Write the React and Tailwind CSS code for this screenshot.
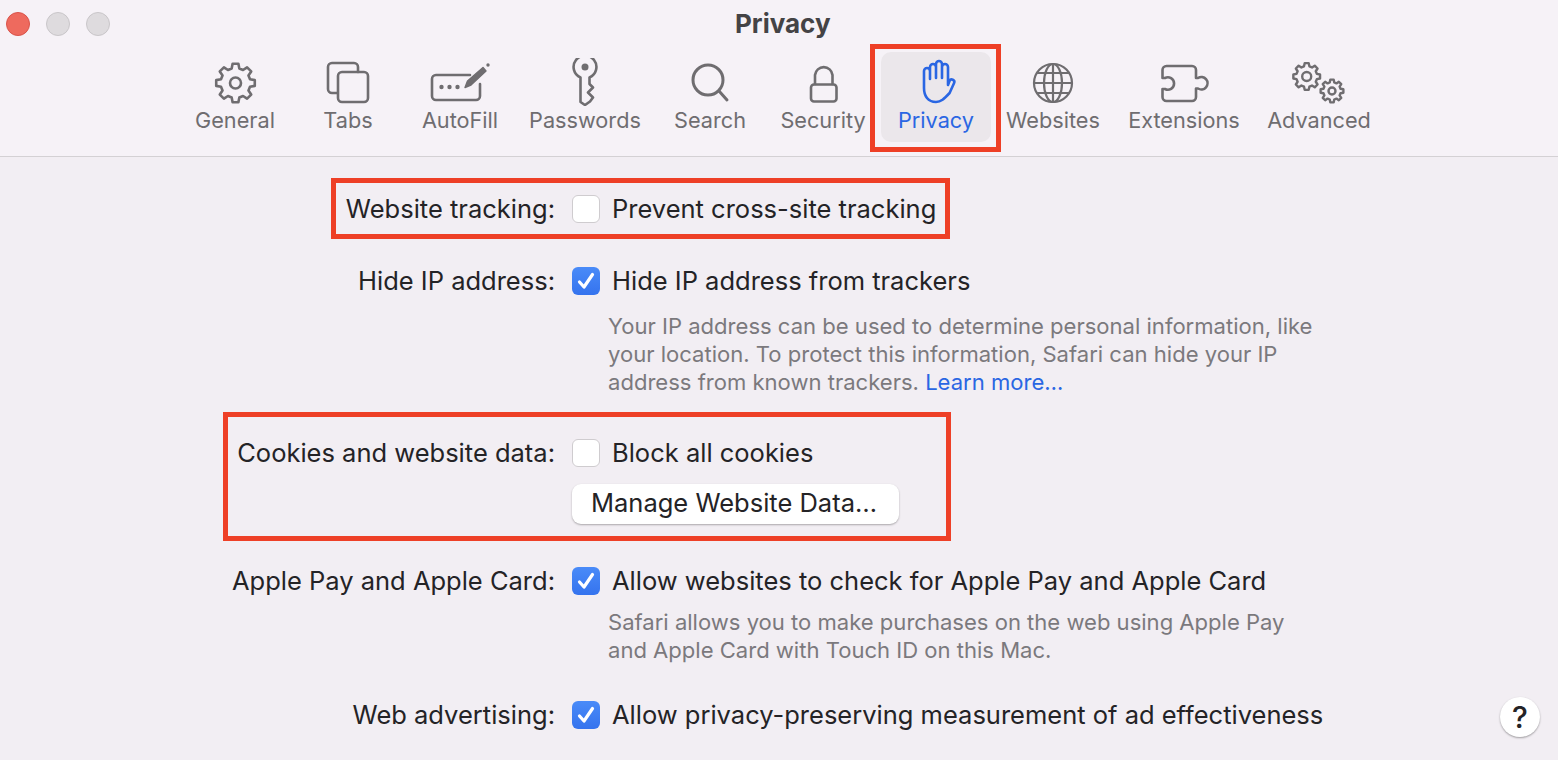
import React from "react";

function gear(cx, cy, rO, rI, n, offset = 0) {
  const step = (Math.PI * 2) / n;
  let d = "";
  for (let i = 0; i < n; i++) {
    const a = -Math.PI / 2 + offset + i * step;
    const pts = [
      [rI, a - 0.33 * step],
      [rO, a - 0.19 * step],
      [rO, a + 0.19 * step],
      [rI, a + 0.33 * step],
    ];
    pts.forEach(([r, t], j) => {
      const x = (cx + r * Math.cos(t)).toFixed(2);
      const y = (cy + r * Math.sin(t)).toFixed(2);
      d += i === 0 && j === 0 ? `M${x} ${y}` : ` L${x} ${y}`;
    });
  }
  return d + " Z";
}

function Icon({ cx, color = "#6f6d70", sw = 2.6, children }) {
  return (
    <svg
      width="60"
      height="48"
      viewBox={`${cx - 30} 58 60 48`}
      fill="none"
      stroke={color}
      strokeWidth={sw}
      strokeLinecap="round"
      strokeLinejoin="round"
      className="block"
    >
      {children}
    </svg>
  );
}

const tabs = [
  {
    label: "General",
    w: "w-[112px]",
    icon: (
      <Icon cx={235}>
        <path d={gear(235.5, 83, 19.5, 15, 8)} />
        <circle cx="235.5" cy="83" r="5.5" />
      </Icon>
    ),
  },
  {
    label: "Tabs",
    w: "w-[114px]",
    icon: (
      <Icon cx={348}>
        <path d="M337 93 H332 A4 4 0 0 1 328 89 V67 A4 4 0 0 1 332 63 H354 A4 4 0 0 1 358 67 V72" />
        <rect x="338" y="72" width="30" height="30" rx="4" />
      </Icon>
    ),
  },
  {
    label: "AutoFill",
    w: "w-[110px]",
    icon: (
      <Icon cx={460}>
        <path d="M470 75 H436 A4 4 0 0 0 432 79 V96 A4 4 0 0 0 436 100 H476 A4 4 0 0 0 480 96 V84" />
        <circle cx="441.5" cy="87" r="2.2" fill="#6f6d70" stroke="none" />
        <circle cx="449.5" cy="87" r="2.2" fill="#6f6d70" stroke="none" />
        <circle cx="457.5" cy="87" r="2.2" fill="#6f6d70" stroke="none" />
        <path d="M465 87.5 L467.5 81 L483 67.5 L486 71 L471 85 Z" fill="#6f6d70" strokeWidth="1.4" />
        <circle cx="488" cy="65" r="1.7" fill="#6f6d70" stroke="none" />
      </Icon>
    ),
  },
  {
    label: "Passwords",
    w: "w-[140px]",
    icon: (
      <Icon cx={585}>
        <path d="M580.5 77.5 V102 L585 105 L590 101.5 L593 97.5 L588 92.5 L593 87.5 L589.5 84 V77.5 A11.4 11.4 0 1 0 580.5 77.5 Z" />
        <circle cx="585" cy="67" r="3.5" fill="#6f6d70" stroke="none" />
      </Icon>
    ),
  },
  {
    label: "Search",
    w: "w-[110px]",
    icon: (
      <Icon cx={710} sw={3}>
        <circle cx="708" cy="80" r="15" />
        <path d="M719 91 L727 100" />
      </Icon>
    ),
  },
  {
    label: "Security",
    w: "w-[116px]",
    icon: (
      <Icon cx={823}>
        <rect x="811" y="84.5" width="25.5" height="17" rx="3" />
        <path d="M815 84 V75 A8.8 8.8 0 0 1 832.5 75 V84" />
      </Icon>
    ),
  },
  {
    label: "Privacy",
    w: "w-[110px]",
    active: true,
    icon: (
      <Icon cx={936} color="#2a66e3">
        <path d="M924 86 V71 a3 3 0 0 1 6 0 V79 V67 a3 3 0 0 1 6 0 V78 V64 a3 3 0 0 1 6 0 V78 V67 a3 3 0 0 1 6 0 V85 l1.5 -4 a2.5 2.5 0 0 1 4.6 2 l-4.5 10 C944 99 941 102 936 102 C928 102 924 96 924 88 Z" />
      </Icon>
    ),
  },
  {
    label: "Websites",
    w: "w-[124px]",
    icon: (
      <Icon cx={1053} sw={2.2}>
        <circle cx="1053" cy="83" r="19" />
        <ellipse cx="1053" cy="83" rx="9" ry="19" />
        <path d="M1053 64 V102 M1034 83 H1072 M1037 73 H1069 M1037 93 H1069" />
      </Icon>
    ),
  },
  {
    label: "Extensions",
    w: "w-[138px]",
    icon: (
      <Icon cx={1184}>
        <path d="M1162.5 70 A4 4 0 0 1 1166.5 66 H1192 A4 4 0 0 1 1196 70 V78 H1198 A6.2 6.2 0 1 1 1198 88.5 H1196 V97 A4 4 0 0 1 1192 101 H1166.5 A4 4 0 0 1 1162.5 97 V89 H1165 A6.2 6.2 0 1 0 1165 78 H1162.5 Z" />
      </Icon>
    ),
  },
  {
    label: "Advanced",
    w: "w-[132px]",
    icon: (
      <Icon cx={1319} sw={2.4}>
        <path d={gear(1306.7, 76.5, 13.5, 10.5, 8)} />
        <circle cx="1306.7" cy="76.5" r="4.5" />
        <path d={gear(1332, 91, 11.5, 8.8, 8)} />
        <circle cx="1332" cy="91" r="3.5" />
      </Icon>
    ),
  },
];

function Check({ on }) {
  if (!on) {
    return (
      <span className="block w-7 h-7 shrink-0 rounded-[6px] bg-white border border-[#cfcccf]" />
    );
  }
  return (
    <span className="flex items-center justify-center w-7 h-7 shrink-0 rounded-[6px] bg-gradient-to-b from-[#4a8bf8] to-[#3573ee]">
      <svg width="20" height="20" viewBox="0 0 20 20" fill="none" stroke="white" strokeWidth="3.2" strokeLinecap="round" strokeLinejoin="round">
        <path d="M3.5 11 L8 16 L16.5 3.5" />
      </svg>
    </span>
  );
}

function Row({ label, on, text, className = "" }) {
  return (
    <div className={`flex items-center h-7 ${className}`}>
      <div className="w-[555px] shrink-0 text-right whitespace-nowrap pt-px">{label}</div>
      <div className="ml-[17px] shrink-0">
        <Check on={on} />
      </div>
      <div className="ml-3 whitespace-nowrap pt-px">{text}</div>
    </div>
  );
}

function Desc({ children, className = "" }) {
  return (
    <p className={`ml-[608px] text-[22.05px] leading-[28px] text-[#7b797d] whitespace-nowrap ${className}`}>
      {children}
    </p>
  );
}

export default function App() {
  return (
    <div
      className="relative w-[1558px] h-[760px] overflow-hidden bg-[#f2eef3] text-[25.5px] text-[#242326]"
      style={{ fontFamily: "Inter, 'Noto Sans', sans-serif" }}
    >
      <header className="h-[157px] bg-[#f6f2f7] border-b border-[#d4d1d4]">
        <div className="flex items-center h-[48px] pl-1.5">
          <div className="flex gap-4">
            <span className="block w-6 h-6 rounded-full bg-[#ee6a5e] border border-[#d9534a]" />
            <span className="block w-6 h-6 rounded-full bg-[#dedbde] border border-[#c9c6c9]" />
            <span className="block w-6 h-6 rounded-full bg-[#dedbde] border border-[#c9c6c9]" />
          </div>
          <h1 className="ml-[625px] pb-[2px] text-[26px] font-bold text-[#444345]">Privacy</h1>
        </div>
        <nav className="flex pl-[179px] mt-1">
          {tabs.map((t) => (
            <div
              key={t.label}
              className={`flex flex-col items-center h-[90px] pt-[6px] shrink-0 rounded-[10px] ${t.w} ${t.active ? "bg-[#ebe7eb] text-[#2a66e3]" : "text-[#6f6d70]"}`}
            >
              {t.icon}
              <span className="text-[21.7px] leading-[28px] whitespace-nowrap">{t.label}</span>
            </div>
          ))}
        </nav>
      </header>

      <main>
        <Row className="mt-[38px]" label="Website tracking:" text="Prevent cross-site tracking" />
        <Row className="mt-[44px]" label="Hide IP address:" on text="Hide IP address from trackers" />
        <Desc className="mt-[17px]">
          Your IP address can be used to determine personal information, like
          <br />
          your location. To protect this information, Safari can hide your IP
          <br />
          address from known trackers. <span className="text-[#2a66e3]">Learn more…</span>
        </Desc>
        <Row className="mt-[43px]" label="Cookies and website data:" text="Block all cookies" />
        <button className="block ml-[572px] mt-[17px] w-[327px] h-10 pb-px pr-[3px] rounded-[9px] bg-white text-center shadow-[0_1px_2px_rgba(0,0,0,0.3)]">
          Manage Website Data…
        </button>
        <Row className="mt-[43px]" label="Apple Pay and Apple Card:" on text="Allow websites to check for Apple Pay and Apple Card" />
        <Desc className="mt-[13px]">
          Safari allows you to make purchases on the web using Apple Pay
          <br />
          and Apple Card with Touch ID on this Mac.
        </Desc>
        <Row className="mt-[37px]" label="Web advertising:" on text="Allow privacy-preserving measurement of ad effectiveness" />
      </main>

      <div className="absolute left-[1500px] top-[697px] w-10 h-10 rounded-full bg-white flex items-center justify-center text-[30px] font-medium shadow-[0_1px_2px_rgba(0,0,0,0.35)]">
        ?
      </div>

      <div className="absolute left-[870px] top-[44px] w-[131px] h-[108px] border-[5px] border-[#ee3f26]" />
      <div className="absolute left-[331px] top-[178px] w-[619px] h-[61px] border-[5px] border-[#ee3f26]" />
      <div className="absolute left-[223px] top-[412px] w-[728px] h-[129px] border-[5px] border-[#ee3f26]" />
    </div>
  );
}
